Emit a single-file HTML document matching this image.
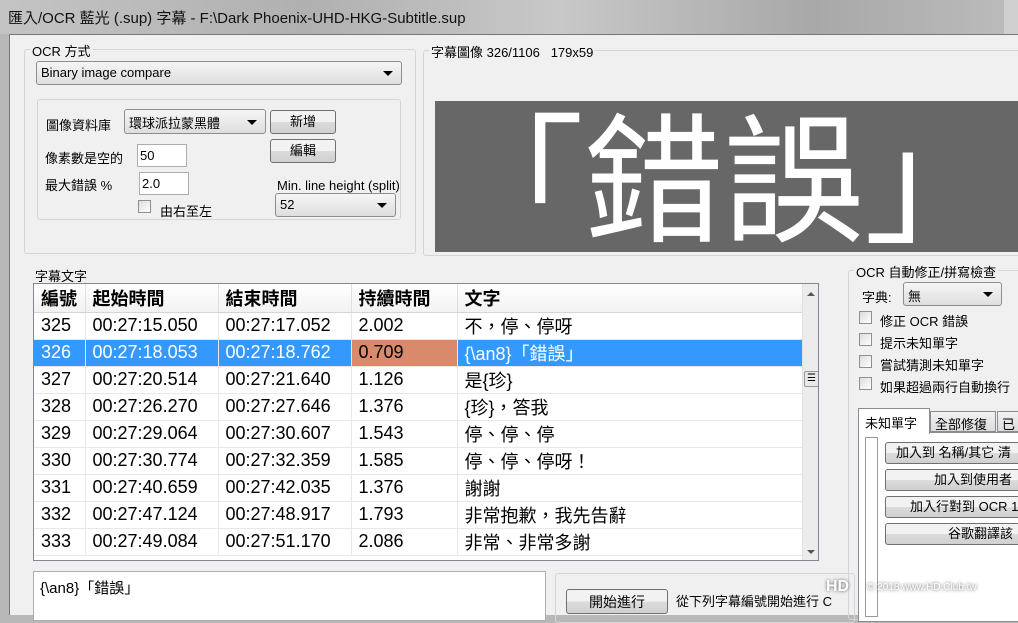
<!DOCTYPE html>
<html><head><meta charset="utf-8"><style>
*{box-sizing:border-box;margin:0;padding:0}
body{width:1018px;height:615px;overflow:hidden;background:#b8b8b8;font-family:"Liberation Sans","Noto Sans CJK TC",sans-serif;font-size:13px;color:#000;position:relative}
.a{position:absolute}
.title{left:0;top:0;width:1018px;height:34px;background:linear-gradient(90deg,#c4c4c4,#b0b0b0 30%,#c8c8c8 55%,#a8a8a8 80%,#bcbcbc);}
.title span{position:absolute;left:8px;top:7px;font-size:15px;color:#111}
.main{left:9px;top:34px;width:1009px;height:581px;background:#f0f0f0;border-left:1px solid #777;border-top:1px solid #777}
.grp{border:1px solid #d5d5d5;border-radius:3px}
.lbl{background:#f0f0f0;padding:0 2px;font-size:13px;white-space:nowrap}
.combo{border:1px solid #8e8e8e;border-radius:3px;background:linear-gradient(#f6f6f6,#dedede);font-size:13px;padding:3px 4px}
.combo:after{content:"";position:absolute;right:8px;top:50%;margin-top:-2px;border:5px solid transparent;border-top:5px solid #000;border-bottom:0}
.btn{border:1px solid #707070;border-radius:3px;background:linear-gradient(#f2f2f2 50%,#dcdcdc 50%,#d0d0d0);text-align:center;font-size:13px}
.inp{background:#fff;border:1px solid #abadb3}
.cb{width:13px;height:13px;border:1px solid #8f8f8f;background:linear-gradient(135deg,#dcdcdc,#fff)}
table{border-collapse:collapse;font-size:18px}
td{height:27px;border-right:1px solid #e8e8e8;border-bottom:1px solid #e8e8e8;padding-left:7px;white-space:nowrap}
tr.h td{height:28px;background:linear-gradient(#fff,#f2f2f2);border-bottom:1px solid #d5d5d5;border-right:1px solid #e0e0e0;font-weight:bold}
tr.s td{background:#3399ff;color:#fff}
tr.s td.o{background:#d88a6a;color:#000}
</style></head><body>
<div class="a title"><span>匯入/OCR 藍光 (.sup) 字幕 - F:\Dark Phoenix-UHD-HKG-Subtitle.sup</span></div>
<div class="a" style="left:1004px;top:0;width:14px;height:34px;background:#d0d0d0"></div>
<div class="a main"></div>

<!-- OCR group -->
<div class="a grp" style="left:24px;top:49px;width:392px;height:205px"></div>
<div class="a lbl" style="left:30px;top:41px">OCR 方式</div>
<div class="a combo" style="left:36px;top:61px;width:366px;height:24px">Binary image compare</div>
<div class="a grp" style="left:37px;top:99px;width:364px;height:121px"></div>
<div class="a" style="left:46px;top:115px">圖像資料庫</div>
<div class="a combo" style="left:124px;top:109px;width:142px;height:25px">環球派拉蒙黑體</div>
<div class="a btn" style="left:270px;top:110px;width:66px;height:24px;line-height:22px">新增</div>
<div class="a btn" style="left:270px;top:139px;width:66px;height:24px;line-height:22px">編輯</div>
<div class="a" style="left:45px;top:148px">像素數是空的</div>
<div class="a inp" style="left:137px;top:144px;width:50px;height:23px;padding:3px 2px">50</div>
<div class="a" style="left:45px;top:175px">最大錯誤 %</div>
<div class="a inp" style="left:139px;top:172px;width:50px;height:23px;padding:3px 2px">2.0</div>
<div class="a cb" style="left:138px;top:200px"></div>
<div class="a" style="left:160px;top:201px">由右至左</div>
<div class="a" style="left:277px;top:178px;white-space:nowrap">Min. line height (split)</div>
<div class="a combo" style="left:275px;top:193px;width:121px;height:24px">52</div>

<!-- image group -->
<div class="a grp" style="left:423px;top:50px;width:600px;height:206px"></div>
<div class="a lbl" style="left:429px;top:42px">字幕圖像 326/1106&nbsp;&nbsp; 179x59</div>
<div class="a" style="left:435px;top:101px;width:583px;height:151px;background:#676767;overflow:hidden">
<div class="a" style="left:9px;top:0px;color:#fff;font-size:140px;line-height:140px;font-family:'Noto Sans CJK TC',sans-serif;white-space:nowrap">「錯誤」</div>
</div>

<!-- table -->
<div class="a" style="left:35px;top:266px">字幕文字</div>
<div class="a" style="left:33px;top:283px;width:786px;height:278px;border:1px solid #828790;background:#fff;overflow:hidden">
<table style="position:absolute;left:0;top:0;width:769px">
<colgroup><col style="width:51px"><col style="width:133px"><col style="width:133px"><col style="width:106px"><col></colgroup>
<tr class="h"><td>編號</td><td>起始時間</td><td>結束時間</td><td>持續時間</td><td>文字</td></tr>
<tr><td>325</td><td>00:27:15.050</td><td>00:27:17.052</td><td>2.002</td><td>不，停、停呀</td></tr>
<tr class="s"><td>326</td><td>00:27:18.053</td><td>00:27:18.762</td><td class="o">0.709</td><td>{\an8}「錯誤」</td></tr>
<tr><td>327</td><td>00:27:20.514</td><td>00:27:21.640</td><td>1.126</td><td>是{珍}</td></tr>
<tr><td>328</td><td>00:27:26.270</td><td>00:27:27.646</td><td>1.376</td><td>{珍}，答我</td></tr>
<tr><td>329</td><td>00:27:29.064</td><td>00:27:30.607</td><td>1.543</td><td>停、停、停</td></tr>
<tr><td>330</td><td>00:27:30.774</td><td>00:27:32.359</td><td>1.585</td><td>停、停、停呀！</td></tr>
<tr><td>331</td><td>00:27:40.659</td><td>00:27:42.035</td><td>1.376</td><td>謝謝</td></tr>
<tr><td>332</td><td>00:27:47.124</td><td>00:27:48.917</td><td>1.793</td><td>非常抱歉，我先告辭</td></tr>
<tr><td>333</td><td>00:27:49.084</td><td>00:27:51.170</td><td>2.086</td><td>非常、非常多謝</td></tr>
</table>
<div class="a" style="left:768px;top:0;width:17px;height:276px;background:#ececec;border-left:1px solid #e0e0e0"></div>
<div class="a" style="left:773px;top:8px;border:4px solid transparent;border-bottom:4px solid #555;border-top:0"></div>
<div class="a" style="left:773px;top:266px;border:4px solid transparent;border-top:4px solid #555;border-bottom:0"></div>
<div class="a" style="left:770px;top:87px;width:15px;height:16px;border:1px solid #999;border-radius:2px;background:#e8e8e8;font-size:10px;text-align:center;line-height:13px">☰</div>
</div>

<!-- bottom -->
<div class="a inp" style="left:33px;top:571px;width:513px;height:50px;padding:5px 6px;font-size:15px">{\an8}「錯誤」</div>
<div class="a grp" style="left:555px;top:573px;width:300px;height:50px"></div>
<div class="a btn" style="left:566px;top:589px;width:102px;height:25px;line-height:24px;font-size:14px">開始進行</div>
<div class="a" style="left:676px;top:591px;white-space:nowrap">從下列字幕編號開始進行 C</div>

<!-- right panel -->
<div class="a grp" style="left:848px;top:270px;width:180px;height:350px"></div>
<div class="a lbl" style="left:854px;top:262px">OCR 自動修正/拼寫檢查</div>
<div class="a" style="left:862px;top:287px">字典:</div>
<div class="a combo" style="left:903px;top:282px;width:99px;height:24px">無</div>
<div class="a cb" style="left:859px;top:311px"></div><div class="a" style="left:880px;top:311px">修正 OCR 錯誤</div>
<div class="a cb" style="left:859px;top:333px"></div><div class="a" style="left:880px;top:333px">提示未知單字</div>
<div class="a cb" style="left:859px;top:355px"></div><div class="a" style="left:880px;top:355px">嘗試猜測未知單字</div>
<div class="a cb" style="left:859px;top:377px"></div><div class="a" style="left:880px;top:377px;white-space:nowrap">如果超過兩行自動換行</div>
<div class="a" style="left:858px;top:432px;width:170px;height:190px;background:#fff;border:1px solid #898c95"></div>
<div class="a" style="left:858px;top:408px;width:72px;height:26px;background:#fff;border:1px solid #898c95;border-bottom:none;padding:4px 6px">未知單字</div>
<div class="a" style="left:930px;top:411px;width:66px;height:21px;background:linear-gradient(#f2f2f2,#dcdcdc);border:1px solid #898c95;padding:2px 4px">全部修復</div>
<div class="a" style="left:997px;top:411px;width:30px;height:21px;background:linear-gradient(#f2f2f2,#dcdcdc);border:1px solid #898c95;padding:2px 4px">已</div>
<div class="a" style="left:865px;top:437px;width:13px;height:180px;border:1px solid #999"></div>
<div class="a btn" style="left:885px;top:442px;width:140px;height:22px;line-height:20px;white-space:nowrap;overflow:hidden;text-align:left;padding-left:10px">加入到 名稱/其它 清</div>
<div class="a btn" style="left:885px;top:469px;width:140px;height:22px;line-height:20px;white-space:nowrap;overflow:hidden;text-align:left;padding-left:48px">加入到使用者</div>
<div class="a btn" style="left:885px;top:496px;width:140px;height:22px;line-height:20px;white-space:nowrap;overflow:hidden;text-align:left;padding-left:24px">加入行對到 OCR 1</div>
<div class="a btn" style="left:885px;top:523px;width:140px;height:22px;line-height:20px;white-space:nowrap;overflow:hidden;text-align:left;padding-left:62px">谷歌翻譯該</div>
<div class="a" style="left:826px;top:578px;color:#fff;font-size:16px;font-weight:bold;text-shadow:0 0 3px #555">HD</div>
<div class="a" style="left:867px;top:582px;color:#fff;font-size:10px;text-shadow:0 0 3px #444;white-space:nowrap">© 2018 www.HD.Club.tw</div>
</body></html>
